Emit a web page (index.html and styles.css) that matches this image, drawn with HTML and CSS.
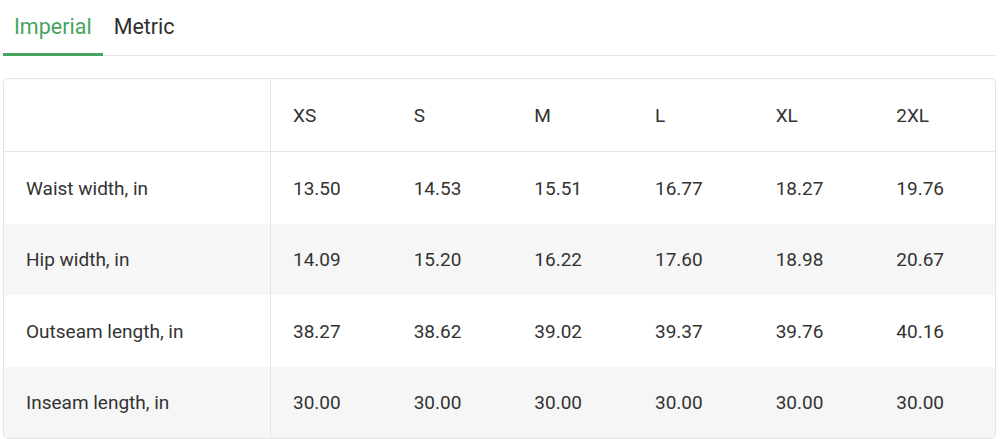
FILE: index.html
```html
<!DOCTYPE html>
<html>
<head>
<meta charset="utf-8">
<link rel="stylesheet" href="styles.css">
</head>
<body>
<div class="page">
  <div class="tabs">
    <div class="tab active">Imperial</div>
    <div class="tab">Metric</div>
  </div>
  <div class="table-wrap">
    <table class="sizes">
      <thead>
        <tr><th class="label"></th><th>XS</th><th>S</th><th>M</th><th>L</th><th>XL</th><th>2XL</th></tr>
      </thead>
      <tbody>
        <tr class="odd"><td class="label">Waist width, in</td><td>13.50</td><td>14.53</td><td>15.51</td><td>16.77</td><td>18.27</td><td>19.76</td></tr>
        <tr class="even"><td class="label">Hip width, in</td><td>14.09</td><td>15.20</td><td>16.22</td><td>17.60</td><td>18.98</td><td>20.67</td></tr>
        <tr class="odd"><td class="label">Outseam length, in</td><td>38.27</td><td>38.62</td><td>39.02</td><td>39.37</td><td>39.76</td><td>40.16</td></tr>
        <tr class="even"><td class="label">Inseam length, in</td><td>30.00</td><td>30.00</td><td>30.00</td><td>30.00</td><td>30.00</td><td>30.00</td></tr>
      </tbody>
    </table>
  </div>
</div>
</body>
</html>
```
FILE: styles.css
```css
html, body {
  margin: 0;
  padding: 0;
  background: #ffffff;
}
body {
  font-family: Roboto, "Liberation Sans", sans-serif;
  color: #333333;
}
.page {
  padding: 0 4px 0 3px;
}
.tabs {
  display: flex;
  border-bottom: 1px solid #e6e6e6;
}
.tab {
  font-size: 21.5px;
  line-height: 24px;
  padding: 15px 11px 14px 11px;
  border-bottom: 3px solid transparent;
  margin-bottom: -1px;
  color: #2f2f2f;
}
.tab.active {
  color: #46a45e;
  border-bottom-color: #46a45e;
}
.table-wrap {
  margin-top: 22px;
  border: 1px solid #e3e3e3;
  border-radius: 5px;
  overflow: hidden;
}
.sizes {
  width: 100%;
  border-collapse: separate;
  border-spacing: 0;
  table-layout: fixed;
  font-size: 19px;
}
.sizes th, .sizes td {
  text-align: left;
  font-weight: 400;
  padding: 0 0 0 22px;
  color: #333333;
}
.sizes th.label, .sizes td.label {
  width: 244px;
  border-right: 1px solid #e6e6e6;
}
.sizes thead th {
  height: 72px;
  border-bottom: 1px solid #e6e6e6;
}
.sizes tbody tr.odd td {
  height: 72px;
  background: #ffffff;
}
.sizes tbody tr.even td {
  height: 71px;
  background: #f6f6f6;
}
```
